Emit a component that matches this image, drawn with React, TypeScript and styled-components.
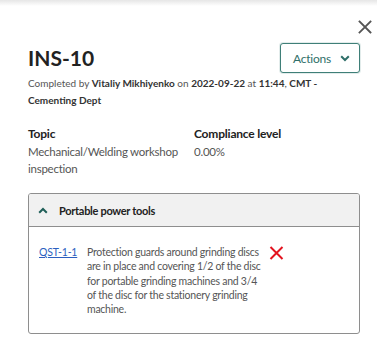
import React from "react";
import styled, { createGlobalStyle } from "styled-components";

const Global = createGlobalStyle`
  html, body { margin: 0; padding: 0; background: #fff; }
  body { font-family: Lato, "Open Sans", sans-serif; color: #444; }
`;

const TopShade = styled.div`
  height: 6px;
  background: linear-gradient(#e6e6e6, #ffffff);
`;

const Panel = styled.div`
  padding: 0 17px 20px 28px;
`;

const CloseRow = styled.div`
  display: flex;
  justify-content: flex-end;
  padding-top: 14px;
  margin-right: -12px;
`;

const CloseButton = styled.button`
  border: 0;
  background: none;
  padding: 0;
  width: 14px;
  height: 14px;
  display: block;
  cursor: pointer;
`;

const TitleRow = styled.div`
  display: flex;
  justify-content: space-between;
  align-items: center;
  margin-top: 9px;
`;

const Title = styled.h1`
  margin: 0;
  font-size: 21px;
  font-weight: 700;
  color: #222;
  line-height: 30px;
`;

const ActionsButton = styled.button`
  display: flex;
  align-items: center;
  gap: 9px;
  height: 30px;
  width: 80px;
  justify-content: center;
  box-sizing: border-box;
  border: 1px solid #3f7f78;
  border-radius: 3px;
  background: #fff;
  color: #2f6f69;
  font-family: inherit;
  font-size: 12px;
  letter-spacing: -0.2px;
  padding: 0 0 0 3px;
  box-shadow: 0 0 0 1px rgba(63, 127, 120, 0.15);
`;

const Meta = styled.p`
  margin: 2px 0 0;
  font-size: 10px;
  line-height: 17px;
  color: #555;
`;

const Strong = styled.b`
  font-weight: 700;
  color: #333;
`;

const InfoGrid = styled.div`
  display: grid;
  grid-template-columns: 1fr 1fr;
  margin-top: 16px;
`;

const Label = styled.div`
  font-size: 12px;
  font-weight: 700;
  color: #222;
  line-height: 17px;
  letter-spacing: -0.2px;
`;

const Value = styled.div`
  font-size: 11.5px;
  line-height: 16.5px;
  letter-spacing: -0.25px;
  color: #555;
  margin-top: 2px;
  padding-right: 8px;
`;

const Accordion = styled.div`
  margin-top: 16px;
  border: 1px solid #8e8e8e;
  border-radius: 3px;
  overflow: hidden;
`;

const AccordionHeader = styled.div`
  display: flex;
  align-items: center;
  gap: 11px;
  height: 32px;
  padding-left: 9px;
  background: #f1f1f1;
  border-bottom: 1px solid #8e8e8e;
  font-size: 11px;
  letter-spacing: -0.3px;
  font-weight: 700;
  color: #222;
`;

const AccordionBody = styled.div`
  display: grid;
  grid-template-columns: 48px 178px 20px;
  align-items: start;
  padding: 18px 10px 17px 10px;
`;

const Link = styled.a`
  font-size: 10.5px;
  line-height: 14.3px;
  letter-spacing: -0.2px;
  color: #2c5fc0;
  text-decoration: underline;
`;

const Description = styled.div`
  font-size: 10.5px;
  line-height: 14.3px;
  letter-spacing: -0.25px;
  color: #555;
`;

const FailMark = styled.div`
  padding-left: 4px;
  margin-top: -1px;
`;

export default function App() {
  return (
    <>
      <Global />
      <TopShade />
      <Panel>
        <CloseRow>
          <CloseButton aria-label="Close">
            <svg width="14" height="14" viewBox="0 0 14 14">
              <path d="M1.5 1.5 L12.5 12.5 M12.5 1.5 L1.5 12.5" stroke="#555" strokeWidth="1.8" strokeLinecap="square" />
            </svg>
          </CloseButton>
        </CloseRow>
        <TitleRow>
          <Title>INS-10</Title>
          <ActionsButton>
            Actions
            <svg width="10" height="7" viewBox="0 0 10 7">
              <path d="M1.2 1.2 L5 5 L8.8 1.2" stroke="#2f6f69" strokeWidth="2" fill="none" />
            </svg>
          </ActionsButton>
        </TitleRow>
        <Meta>
          Completed by <Strong>Vitaliy Mikhiyenko</Strong> on <Strong>2022-09-22</Strong> at{" "}
          <Strong>11:44</Strong>, <Strong>CMT - Cementing Dept</Strong>
        </Meta>
        <InfoGrid>
          <div>
            <Label>Topic</Label>
            <Value>Mechanical/Welding workshop inspection</Value>
          </div>
          <div>
            <Label>Compliance level</Label>
            <Value>0.00%</Value>
          </div>
        </InfoGrid>
        <Accordion>
          <AccordionHeader>
            <svg width="10" height="7" viewBox="0 0 10 7">
              <path d="M1.2 5.8 L5 2 L8.8 5.8" stroke="#1f5f58" strokeWidth="2" fill="none" />
            </svg>
            Portable power tools
          </AccordionHeader>
          <AccordionBody>
            <Link href="#">QST-1-1</Link>
            <Description>
              Protection guards around grinding discs are in place and covering 1/2 of the disc for
              portable grinding machines and 3/4 of the disc for the stationery grinding machine.
            </Description>
            <FailMark>
              <svg width="15" height="14" viewBox="0 0 15 14">
                <path d="M1.5 1 L13.5 13 M13.5 1 L1.5 13" stroke="#e3131f" strokeWidth="2" />
              </svg>
            </FailMark>
          </AccordionBody>
        </Accordion>
      </Panel>
    </>
  );
}
